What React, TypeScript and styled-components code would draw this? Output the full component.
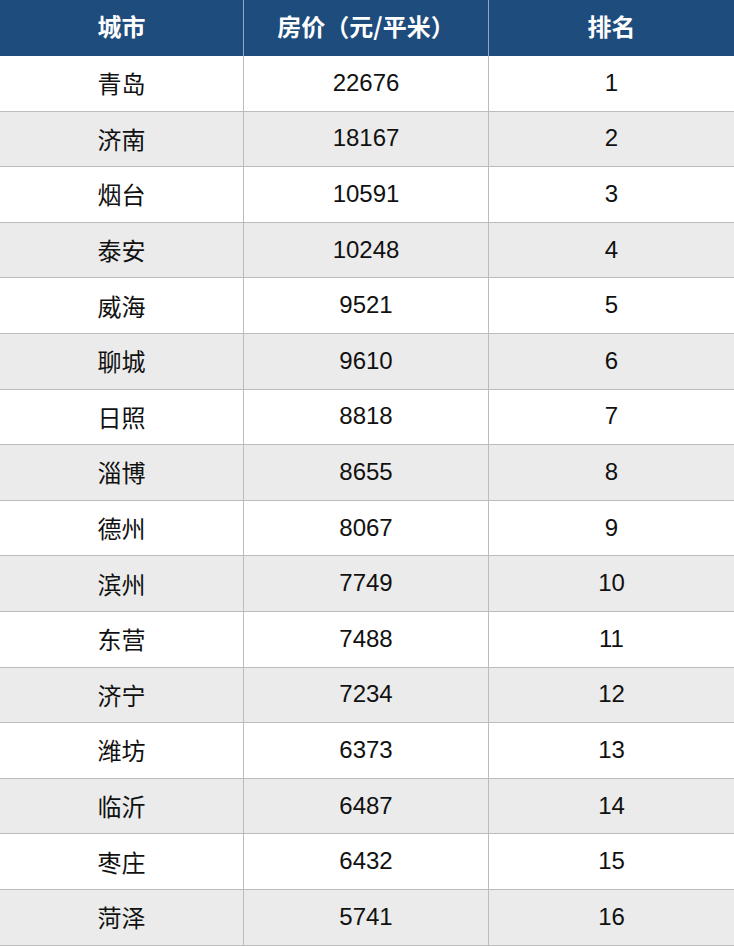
import React from "react";
import styled, { createGlobalStyle } from "styled-components";

const Global = createGlobalStyle`
  html, body { margin: 0; padding: 0; background: #ffffff; }
  body { font-family: "Liberation Sans", "Noto Sans CJK SC", sans-serif; }
`;

const Table = styled.div`
  width: 734px;
  display: flex;
  flex-direction: column;
`;

const Row = styled.div<{ $head?: boolean; $alt?: boolean }>`
  display: grid;
  grid-template-columns: 243px 245px 1fr;
  height: ${(p) => (p.$head ? "56px" : "55.6px")};
  box-sizing: border-box;
  background: ${(p) => (p.$head ? "#1e4c7c" : p.$alt ? "#ebebeb" : "#ffffff")};
  border-bottom: ${(p) => (p.$head ? "none" : "1px solid #bcbcbc")};
`;

const Cell = styled.div<{ $head?: boolean; $first?: boolean; $cjk?: boolean }>`
  display: flex;
  align-items: center;
  justify-content: center;
  box-sizing: border-box;
  border-left: ${(p) =>
    p.$first ? "none" : p.$head ? "1px solid #8fa9c6" : "1px solid #bcbcbc"};
  color: ${(p) => (p.$head ? "#ffffff" : "#111111")};
  font-weight: ${(p) => (p.$head ? 700 : 400)};
  font-size: 24px;
  font-family: ${(p) =>
    p.$cjk || p.$head
      ? `"Noto Sans CJK SC", "Liberation Sans", sans-serif`
      : `"Liberation Sans", "Noto Sans CJK SC", sans-serif`};
  padding-bottom: ${(p) => (p.$head ? "5px" : "1px")};
`;

const data: [string, string, string][] = [
  ["青岛", "22676", "1"],
  ["济南", "18167", "2"],
  ["烟台", "10591", "3"],
  ["泰安", "10248", "4"],
  ["威海", "9521", "5"],
  ["聊城", "9610", "6"],
  ["日照", "8818", "7"],
  ["淄博", "8655", "8"],
  ["德州", "8067", "9"],
  ["滨州", "7749", "10"],
  ["东营", "7488", "11"],
  ["济宁", "7234", "12"],
  ["潍坊", "6373", "13"],
  ["临沂", "6487", "14"],
  ["枣庄", "6432", "15"],
  ["菏泽", "5741", "16"],
];

export default function App() {
  return (
    <>
      <Global />
      <Table>
        <Row $head>
          <Cell $head $first>城市</Cell>
          <Cell $head>房价（元/平米）</Cell>
          <Cell $head>排名</Cell>
        </Row>
        {data.map(([city, price, rank], i) => (
          <Row key={city} $alt={i % 2 === 1}>
            <Cell $first $cjk>{city}</Cell>
            <Cell>{price}</Cell>
            <Cell>{rank}</Cell>
          </Row>
        ))}
      </Table>
    </>
  );
}
